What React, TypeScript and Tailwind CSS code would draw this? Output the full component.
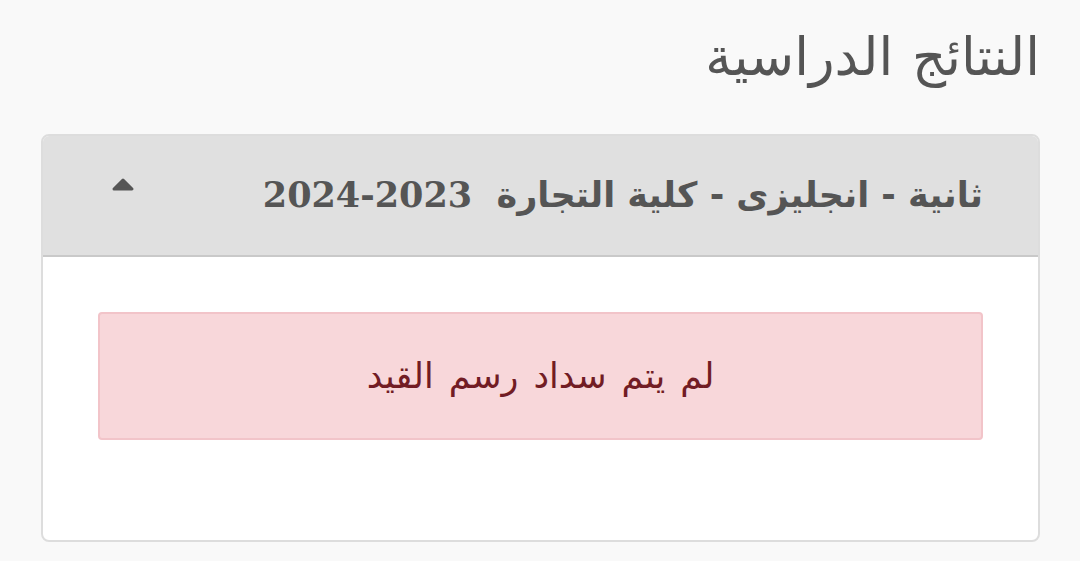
import React from "react";

export default function App() {
  return (
    <div
      dir="rtl"
      className="w-[1080px] h-[561px] bg-[#f9f9f9] overflow-hidden"
      style={{ fontFamily: '"DejaVu Sans", "Noto Sans", sans-serif' }}
    >
      <div className="pr-[40px] pl-[41px] pt-[24px]">
        <h1 className="text-[53px] leading-[66px] text-[#555555] font-normal [word-spacing:2px]">النتائج الدراسية</h1>
        <div className="mt-[44px] border-2 border-[#dddddd] rounded-[8px] bg-white overflow-hidden">
          <div className="h-[121px] bg-[#e0e0e0] border-b-2 border-[#c9c9c9] flex items-center justify-between pr-[55px] pl-[68px]">
            <span className="text-[35px] font-bold text-[#555555] whitespace-pre">
              {"ثانية - انجليزى - كلية التجارة  "}
              <span style={{ fontFamily: '"DejaVu Serif", "Liberation Serif", serif' }}>2023-2024</span>
            </span>
            <svg width="24" height="16" viewBox="0 0 24 16" className="-mt-[24px]">
              <path d="M3 13 L12 4 L21 13 Z" fill="#555555" stroke="#555555" strokeWidth="3" strokeLinejoin="round" />
            </svg>
          </div>
          <div className="pt-[55px] pb-[100px] px-[55px]">
            <div className="h-[128px] bg-[#f8d7da] border-2 border-[#f2c4c9] rounded-[4px] flex items-center justify-center">
              <span className="text-[35px] text-[#721c24] [word-spacing:4px]">لم يتم سداد رسم القيد</span>
            </div>
          </div>
        </div>
      </div>
    </div>
  );
}
